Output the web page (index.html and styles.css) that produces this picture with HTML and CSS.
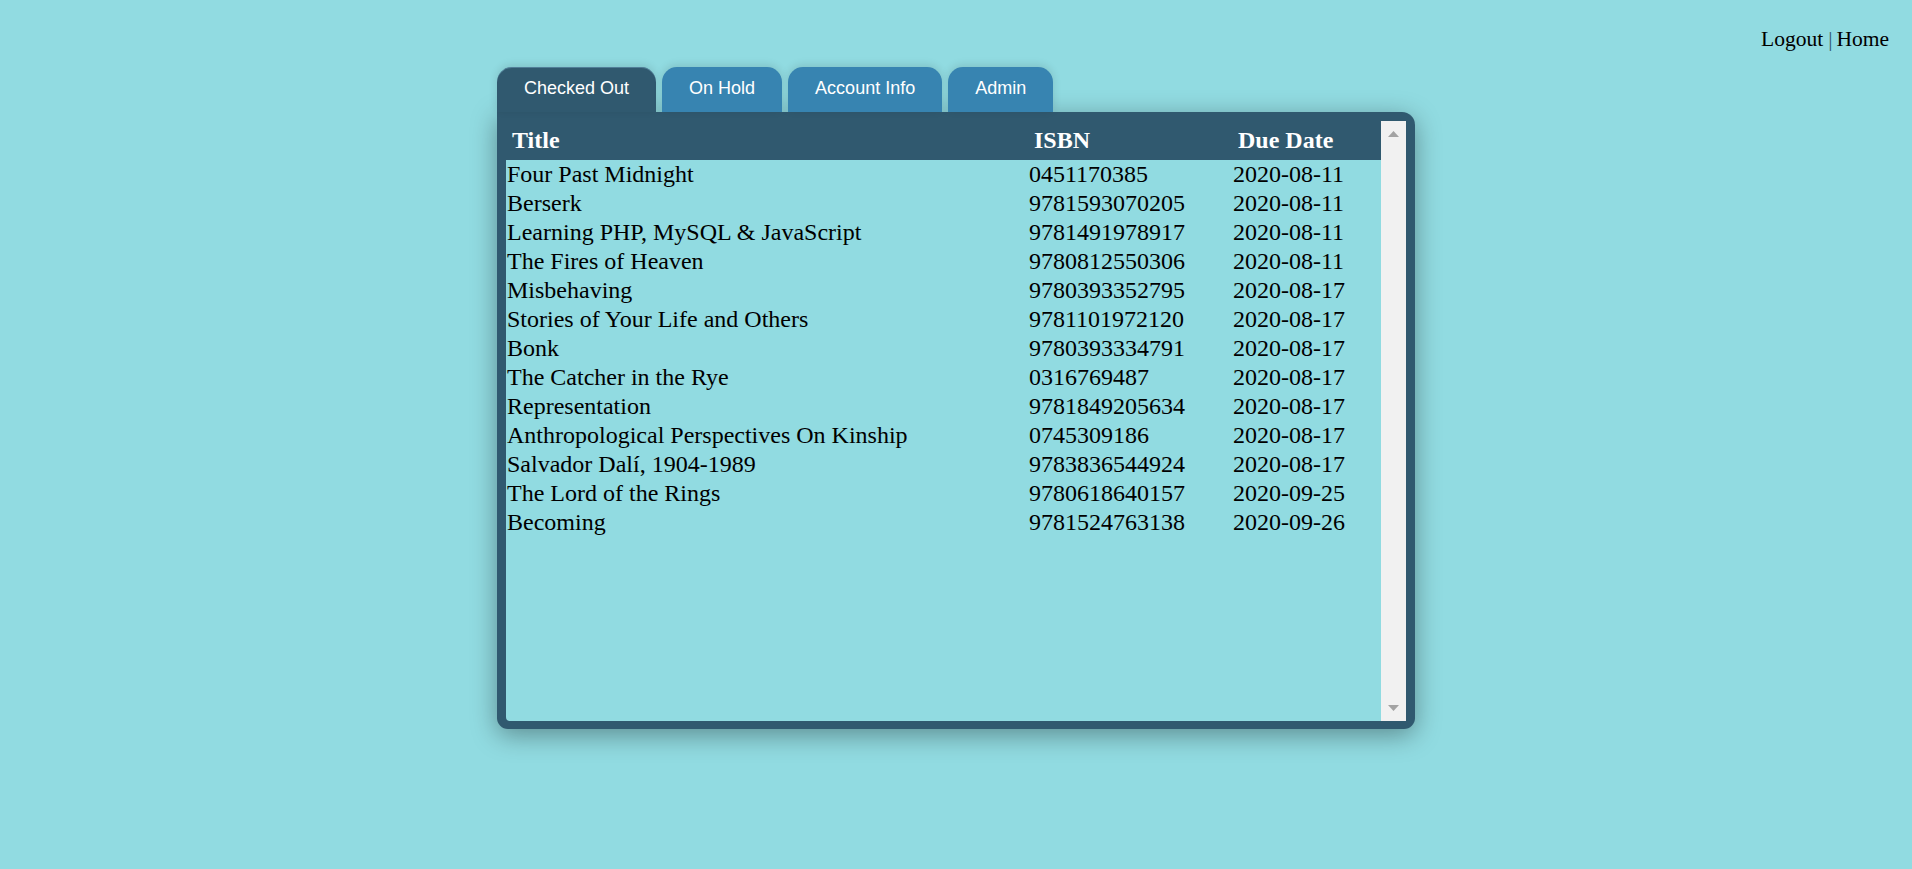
FILE: index.html
```html
<!DOCTYPE html>
<html lang="en">
<head>
<meta charset="utf-8">
<title>Checked Out</title>
<link rel="stylesheet" href="styles.css">
</head>
<body>
<nav class="topnav">
  <a class="navlink" href="#">Logout</a><span class="sep">|</span><a class="navlink" href="#">Home</a>
</nav>
<main class="account">
  <div class="tabs">
    <div class="tab active">Checked Out</div>
    <div class="tab">On Hold</div>
    <div class="tab">Account Info</div>
    <div class="tab">Admin</div>
  </div>
  <section class="panel">
    <div class="inner">
      <div class="tablewrap">
        <table class="books">
          <colgroup><col class="c-title"><col class="c-isbn"><col class="c-due"></colgroup>
          <thead>
            <tr><th>Title</th><th>ISBN</th><th>Due Date</th></tr>
          </thead>
          <tbody>
            <tr><td>Four Past Midnight</td><td>0451170385</td><td>2020-08-11</td></tr>
            <tr><td>Berserk</td><td>9781593070205</td><td>2020-08-11</td></tr>
            <tr><td>Learning PHP, MySQL &amp; JavaScript</td><td>9781491978917</td><td>2020-08-11</td></tr>
            <tr><td>The Fires of Heaven</td><td>9780812550306</td><td>2020-08-11</td></tr>
            <tr><td>Misbehaving</td><td>9780393352795</td><td>2020-08-17</td></tr>
            <tr><td>Stories of Your Life and Others</td><td>9781101972120</td><td>2020-08-17</td></tr>
            <tr><td>Bonk</td><td>9780393334791</td><td>2020-08-17</td></tr>
            <tr><td>The Catcher in the Rye</td><td>0316769487</td><td>2020-08-17</td></tr>
            <tr><td>Representation</td><td>9781849205634</td><td>2020-08-17</td></tr>
            <tr><td>Anthropological Perspectives On Kinship</td><td>0745309186</td><td>2020-08-17</td></tr>
            <tr><td>Salvador Dalí, 1904-1989</td><td>9783836544924</td><td>2020-08-17</td></tr>
            <tr><td>The Lord of the Rings</td><td>9780618640157</td><td>2020-09-25</td></tr>
            <tr><td>Becoming</td><td>9781524763138</td><td>2020-09-26</td></tr>
          </tbody>
        </table>
      </div>
      <div class="scrollbar">
        <svg class="arrow" width="11" height="6" viewBox="0 0 11 6"><polygon points="5.5,0 11,6 0,6" fill="#a3a3a3"/></svg>
        <svg class="arrow" width="11" height="6" viewBox="0 0 11 6"><polygon points="0,0 11,0 5.5,6" fill="#a3a3a3"/></svg>
      </div>
    </div>
  </section>
</main>
</body>
</html>
```

FILE: styles.css
```css
html, body {
  margin: 0;
  padding: 0;
}

body {
  background: #91dbe1;
  font-family: "Liberation Serif", "Times New Roman", serif;
  color: #000;
  min-height: 869px;
}

.topnav {
  display: flex;
  justify-content: flex-end;
  align-items: center;
  padding: 27px 23px 0 0;
  height: 24px;
  font-size: 21.5px;
  line-height: 24px;
}

.navlink {
  color: #000;
  text-decoration: none;
}

.sep {
  color: #30596f;
  margin: 0 4px 0 5px;
}

.account {
  width: 918px;
  margin: 16px auto 0;
}

.tabs {
  display: flex;
  gap: 6px;
  height: 45px;
}

.tab {
  font-family: "Liberation Sans", Arial, sans-serif;
  font-size: 18px;
  color: #fff;
  background: #3784b1;
  padding: 0 27px 2px;
  height: 43px;
  line-height: 43px;
  border-radius: 15px 15px 0 0;
  box-shadow: 0 -2px 8px rgba(0, 0, 0, 0.12);
}

.tab.active {
  background: #30596f;
  box-shadow: inset 0 1px 0 rgba(120, 170, 200, 0.45), 0 -2px 8px rgba(0, 0, 0, 0.12);
}

.panel {
  background: #30596f;
  padding: 9px 9px 8px 9px;
  border-radius: 0 13px 11px 11px;
  box-shadow: 0 6px 26px rgba(0, 0, 0, 0.36);
  height: 600px;
}

.inner {
  display: flex;
  height: 600px;
  border-radius: 0 0 0 4px;
  overflow: hidden;
}

.tablewrap {
  flex: 1;
  background: #91dbe1;
  overflow: hidden;
}

.books {
  border-collapse: collapse;
  border-spacing: 0;
  table-layout: fixed;
  width: 875px;
  font-size: 24px;
}

.c-title { width: 522px; }
.c-isbn { width: 204px; }
.c-due { width: 149px; }

.books thead tr {
  background: #30596f;
}

.books th {
  color: #fff;
  font-weight: bold;
  text-align: left;
  line-height: 39px;
  padding: 0 0 0 6px;
}

.books td {
  line-height: 29px;
  padding: 0 0 0 1px;
  white-space: nowrap;
}

.scrollbar {
  width: 25px;
  background: #f1f1f1;
  display: flex;
  flex-direction: column;
  justify-content: space-between;
  align-items: center;
  padding: 10px 0 10px;
}

.arrow {
  display: block;
}
```
